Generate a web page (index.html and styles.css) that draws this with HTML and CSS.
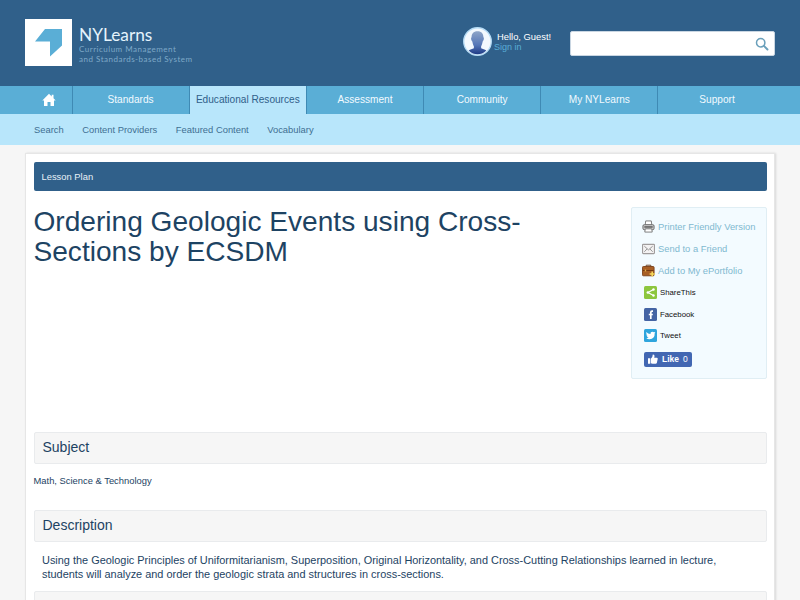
FILE: index.html
```html
<!DOCTYPE html>
<html lang="en">

<head>
    <meta charset="UTF-8">
    <meta name="viewport" content="width=device-width, initial-scale=1.0">
    <title>NYLearns - Lesson Plan</title>
    <link rel="stylesheet" href="styles.css">
</head>

<body>
    <header class="header">
        <a class="logo" href="#">
            <svg class="logo-mark" viewBox="0 0 47 47">
                <rect width="47" height="47" fill="#fff"/>
                <path d="M10 22.500 L20 10 H37 V26.500 L25 37.500 V22.500 Z" fill="#5aaed6"/>
            </svg>
            <span class="logo-text">
                <span class="logo-name">NYLearns</span>
                <span class="logo-line">Curriculum Management</span>
                <span class="logo-line">and Standards-based System</span>
            </span>
        </a>
        <div class="user">
            <svg class="avatar" viewBox="0 0 28 28">
                <defs>
                    <linearGradient id="face" x1="0" y1="0" x2="0" y2="1">
                        <stop offset="0" stop-color="#8fa6c8"/>
                        <stop offset="0.600" stop-color="#5577b8"/>
                        <stop offset="1" stop-color="#1d3a85"/>
                    </linearGradient>
                </defs>
                <circle cx="14" cy="14" r="13.300" fill="#f3f9fe" stroke="#b5dbf5" stroke-width="1.300"/>
                <path d="M14 4 C10 4 8.200 6.500 8.300 10 C7.300 10.500 8 13.500 9 14 C9.500 16.500 10 18 10.500 18.500 V20.500 C9 21.300 7 21.500 5.500 22.700 C8 25.500 11 26.300 14 26.300 S20 25.500 22.500 22.700 C21 21.500 19 21.300 17.500 20.500 V18.500 C18 18 18.500 16.500 19 14 C20 13.500 20.700 10.500 19.700 10 C19.800 6.500 18 4 14 4 Z" fill="url(#face)"/>
            </svg>
            <div class="user-text">
                <span class="hello">Hello, Guest!</span>
                <a class="sign-in" href="#">Sign in</a>
            </div>
        </div>
        <div class="search-box">
            <svg class="search-icon" viewBox="0 0 14 14">
                <circle cx="5.700" cy="5.700" r="4.200" fill="none" stroke="#6aa0bb" stroke-width="1.500"/>
                <path d="M8.900 8.900 L12.500 12.500" stroke="#6aa0bb" stroke-width="2" stroke-linecap="round"/>
            </svg>
        </div>
    </header>

    <nav class="nav">
        <a class="tab home" href="#">
            <svg class="home-icon" viewBox="0 0 14 14">
                <path d="M7 0.700 L9.700 3.400 V1.700 H11.500 V5.200 L13.700 7.400 H12 V13 H8.500 V9 H5.500 V13 H2 V7.400 H0.300 Z" fill="#fff"/>
            </svg>
        </a>
        <a class="tab" href="#">Standards</a>
        <a class="tab active" href="#">Educational Resources</a>
        <a class="tab" href="#">Assessment</a>
        <a class="tab" href="#">Community</a>
        <a class="tab" href="#">My NYLearns</a>
        <a class="tab" href="#">Support</a>
    </nav>

    <div class="subnav">
        <a href="#">Search</a>
        <a href="#">Content Providers</a>
        <a href="#">Featured Content</a>
        <a href="#">Vocabulary</a>
    </div>

    <main class="content">
        <div class="bar">Lesson Plan</div>
        <div class="intro">
            <h1 class="title">Ordering Geologic Events using Cross-Sections by ECSDM</h1>
            <aside class="tools">
                <a class="tool" href="#">
                    <svg class="tool-icon" viewBox="0 0 14 14">
                        <path d="M3.500 5 L4 1 H10 L10.500 5" fill="#fff" stroke="#777"/>
                        <rect x="1" y="5" width="12" height="5.500" rx="1.500" fill="#c9c9c9" stroke="#666"/>
                        <path d="M2.500 7.500 H11.500" stroke="#444" stroke-width="1.300"/>
                        <path d="M3.500 9.500 H10.500 L11 13 H3 Z" fill="#fff" stroke="#777"/>
                    </svg>
                    Printer Friendly Version
                </a>
                <a class="tool" href="#">
                    <svg class="tool-icon" viewBox="0 0 14 14">
                        <rect x="0.600" y="2.500" width="12.800" height="10" rx="0.800" fill="#f4f2f2" stroke="#a09c9c" stroke-width="1.200"/>
                        <path d="M2.500 4.500 L7 8.500 L11.500 4.500 M2.500 10.500 L5.500 7.500 M11.500 10.500 L8.500 7.500" fill="none" stroke="#8d8d8d"/>
                    </svg>
                    Send to a Friend
                </a>
                <a class="tool" href="#">
                    <svg class="tool-icon" viewBox="0 0 14 14">
                        <path d="M4.500 3 V1.300 H9.500 V3" fill="none" stroke="#6b4020"/>
                        <rect x="0.500" y="2.700" width="12.500" height="10" rx="1" fill="#a85f25" stroke="#7c421a"/>
                        <path d="M1 7 H12.500" stroke="#6e3510"/>
                        <rect x="3" y="6" width="1.500" height="2" fill="#e3b04a"/>
                        <path d="M11 8 V13.500 M8.200 10.700 H13.800" stroke="#f6d95b" stroke-width="1.700"/>
                    </svg>
                    Add to My ePortfolio
                </a>
                <a class="share" href="#">
                    <svg class="share-icon" viewBox="0 0 13 13">
                        <rect width="13" height="13" rx="1.500" fill="#8cc63e"/>
                        <path d="M9.500 3.500 L4 6.500 L9.500 9.500" fill="none" stroke="#fff" stroke-width="1.200"/>
                        <circle cx="9.500" cy="3.500" r="1.200" fill="#fff"/>
                        <circle cx="3.800" cy="6.500" r="1.200" fill="#fff"/>
                        <circle cx="9.500" cy="9.500" r="1.200" fill="#fff"/>
                    </svg>
                    ShareThis
                </a>
                <a class="share" href="#">
                    <svg class="share-icon" viewBox="0 0 13 13">
                        <rect width="13" height="13" rx="1.500" fill="#4464a4"/>
                        <path d="M9 3.200 H8 Q6.800 3.200 6.800 4.400 V11 M4.800 6.500 H8.800" fill="none" stroke="#fff" stroke-width="1.700"/>
                    </svg>
                    Facebook
                </a>
                <a class="share" href="#">
                    <svg class="share-icon" viewBox="0 0 13 13">
                        <rect width="13" height="13" rx="1.500" fill="#2fa5dd"/>
                        <path d="M2.300 3 Q4 5 6.400 5.100 Q6.300 2.700 8.400 2.700 Q9.300 2.700 9.900 3.300 L11.300 2.900 L10.700 4.300 Q10.900 9.900 5.600 10.300 Q3.700 10.400 2.200 9.300 Q3.700 9.300 4.700 8.600 Q3.300 8.300 2.900 7.200 L3.700 7.100 Q2.300 6.500 2.300 5.200 L3 5.400 Q1.800 4.400 2.300 3 Z" fill="#fff"/>
                    </svg>
                    Tweet
                </a>
                <a class="like" href="#">
                    <svg class="like-icon" viewBox="0 0 10 10">
                        <path d="M0 4.300 H2.200 V9.700 H0 Z M2.800 4.700 Q4.800 3 4.800 0.500 Q6.800 0.300 6.500 2.500 L6.200 3.800 H9 Q10 4 9.700 5 L8.800 9 Q8.500 9.700 7.700 9.700 H4.500 L2.800 9.200 Z" fill="#fff"/>
                    </svg>
                    <b>Like</b>
                    <span>0</span>
                </a>
            </aside>
        </div>

        <h2 class="section">Subject</h2>
        <p class="subject">Math, Science &amp; Technology</p>
        <h2 class="section">Description</h2>
        <p class="description">Using the Geologic Principles of Uniformitarianism, Superposition, Original Horizontality, and Cross-Cutting Relationships learned in lecture,<br>students will analyze and order the geologic strata and structures in cross-sections.</p>
        <h2 class="section">&nbsp;</h2>
    </main>
</body>

</html>
```
FILE: styles.css
```css
* {
    box-sizing: border-box;
}

body {
    margin: 0;
    height: 600px;
    overflow: hidden;
    background: #f6f6f6;
    font-family: "Liberation Sans", Arial, sans-serif;
    font-size: 9.4px;
    color: #1d4363;
}

a {
    text-decoration: none;
}

svg {
    display: block;
    flex: none;
}

/* Header */
.header {
    display: flex;
    align-items: flex-start;
    height: 86px;
    padding: 19px 25px 0;
    background: #30608a;
}

.logo {
    display: flex;
    width: 438px;
}

.logo-mark {
    width: 47px;
    height: 47px;
}

.logo-text {
    display: flex;
    flex-direction: column;
    padding: 6px 0 0 7px;
    font-family: Lato, sans-serif;
    white-space: nowrap;
}

.logo-name {
    font-size: 17.3px;
    line-height: 20px;
    color: #e4f3fc;
}

.logo-line {
    font-size: 8px;
    line-height: 9.5px;
    letter-spacing: 0.5px;
    color: #7fa9c8;
}

.user {
    display: flex;
    width: 107px;
    padding-top: 8px;
}

.avatar {
    width: 29px;
    height: 29px;
}

.user-text {
    display: flex;
    flex-direction: column;
    padding: 5px 0 0 2px;
    line-height: 10px;
    white-space: nowrap;
}

.hello {
    padding-left: 3px;
    color: #fff;
}

.sign-in {
    font-size: 9px;
    color: #5aaed6;
}

.search-box {
    display: flex;
    justify-content: flex-end;
    align-items: center;
    width: 205px;
    height: 25px;
    margin-top: 12px;
    padding-right: 5px;
    background: #fff;
    border: 1px solid #c9d6e2;
    border-radius: 2px;
}

.search-icon {
    width: 14px;
    height: 14px;
}

/* Main navigation */
.nav {
    display: flex;
    height: 28px;
    padding-left: 25px;
    background: #5aaed6;
}

.tab {
    display: flex;
    justify-content: center;
    align-items: center;
    width: 117.2px;
    border-right: 1px solid #3f8ab4;
    padding-bottom: 1px;
    font-size: 10.1px;
    color: #f2faff;
    white-space: nowrap;
}

.tab:last-child {
    border-right: 0;
}

.tab.home {
    width: 47.5px;
    padding: 0 0 0 1px;
}

.home-icon {
    width: 14px;
    height: 14px;
}

.tab.active {
    background: #b8e6fb;
    color: #30608a;
}

.subnav {
    display: flex;
    gap: 18.5px;
    height: 31px;
    padding-left: 34px;
    background: #b8e6fb;
    line-height: 32px;
}

.subnav a {
    color: #3f6f92;
}

/* Page content */
.content {
    width: 750px;
    height: 460px;
    margin: 8px 25px 0;
    padding: 8px 7px 0 7.5px;
    background: #fff;
    border: 1px solid #e6e6e6;
    box-shadow: 1px 0 2px rgba(0, 0, 0, 0.12);
}

.bar {
    height: 29px;
    padding-left: 8px;
    background: #30608a;
    border-radius: 2px;
    line-height: 30px;
    color: #e8f1f8;
}

.intro {
    display: flex;
    justify-content: space-between;
    align-items: flex-start;
    height: 241px;
    padding-top: 16px;
}

.title {
    width: 510px;
    margin: 0;
    font-size: 28.1px;
    font-weight: normal;
    line-height: 30px;
}

.tools {
    width: 136px;
    height: 172px;
    padding: 8px 0 0 10px;
    background: #f3fbff;
    border: 1px solid #e0eef4;
    border-radius: 2px;
    white-space: nowrap;
}

.tool {
    display: flex;
    align-items: center;
    gap: 3px;
    height: 21.8px;
    color: #7fb9d0;
}

.tool-icon {
    width: 13px;
    height: 13px;
}

.share {
    display: flex;
    align-items: center;
    gap: 3px;
    height: 21.8px;
    padding-left: 2px;
    font-size: 7.8px;
    color: #111;
}

.share-icon {
    width: 13px;
    height: 13px;
}

.like {
    display: flex;
    align-items: center;
    width: 48px;
    height: 15px;
    margin: 5px 0 0 2px;
    padding-left: 4px;
    gap: 4px;
    background: #4267b2;
    border-radius: 2px;
    font-size: 8.5px;
    color: #fff;
}

.like-icon {
    width: 10px;
    height: 10px;
}

.section {
    height: 32px;
    margin: 0;
    padding-left: 8px;
    background: #f6f6f6;
    border: 1px solid #e9ebed;
    border-radius: 2px;
    font-size: 14px;
    font-weight: normal;
    line-height: 29px;
}

.subject {
    height: 46px;
    margin: 0;
    padding-top: 10.5px;
    line-height: 11px;
}

.description {
    height: 49px;
    margin: 0;
    padding: 10.5px 0 0 8.5px;
    font-size: 10.93px;
    line-height: 14px;
    white-space: nowrap;
}
```
